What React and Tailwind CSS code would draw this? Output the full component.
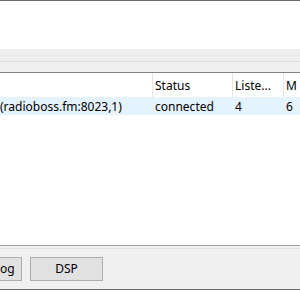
import React from 'react';

const columns = [
  { label: '', width: 'w-[153px]' },
  { label: 'Status', width: 'w-[80px]' },
  { label: 'Liste...', width: 'w-[51px]' },
  { label: 'M', width: 'w-[40px]' },
];

const row = ['(radioboss.fm:8023,1)', 'connected', '4', '6'];

const App = () => {
  return (
    <div className="w-[300px] h-[290px] overflow-hidden bg-[#f0f0f0] flex flex-col text-[12px] text-black" style={{ fontFamily: '"Noto Sans", "Open Sans", sans-serif' }}>
      {/* Top panel */}
      <div className="h-[49px] bg-white border-t border-[#6d6d6d]" />
      <div className="h-[13px] bg-[#eeeeee] border-b border-[#dcdcdc] flex flex-col">
        <div className="h-[6px] bg-[#efefef]" />
        <div className="h-px bg-[#e8e8e8]" />
      </div>
      <div className="h-[11px] bg-[#f0f0f0] border-b border-[#838383]" />

      {/* List view */}
      <div className="h-[172px] bg-white flex flex-col">
        <div className="h-[24px] flex shrink-0">
          {columns.map((c, i) => (
            <div key={i} className={`${c.width} shrink-0 flex items-center pl-[2px] pt-[2px] border-r border-[#e5e5e5] overflow-hidden whitespace-nowrap`}>
              {c.label}
            </div>
          ))}
        </div>
        <div className="h-[18px] flex shrink-0 bg-[#e5f3ff]">
          {row.map((v, i) => (
            <div key={i} className={`${columns[i].width} shrink-0 flex items-center ${i === 0 ? 'pl-0' : 'pl-[2px]'} pt-[2px] overflow-hidden whitespace-nowrap`}>
              {v}
            </div>
          ))}
        </div>
      </div>

      {/* Bottom panel */}
      <div className="flex-1 border-t border-[#a0a0a0] border-b border-b-[#6d6d6d] flex flex-col">
        <div className="h-[3px] border-b border-[#e3e3e3]" />
        <div className="flex gap-[8px] pt-[8px] ml-[-72px]">
          <button className="w-[94px] h-[24px] bg-[#e1e1e1] border border-[#adadad] flex items-center justify-center whitespace-nowrap pr-[6px]">Connection log</button>
          <button className="w-[73px] h-[24px] bg-[#e1e1e1] border border-[#adadad] flex items-center justify-center">DSP</button>
        </div>
      </div>
    </div>
  );
};

export default App;
